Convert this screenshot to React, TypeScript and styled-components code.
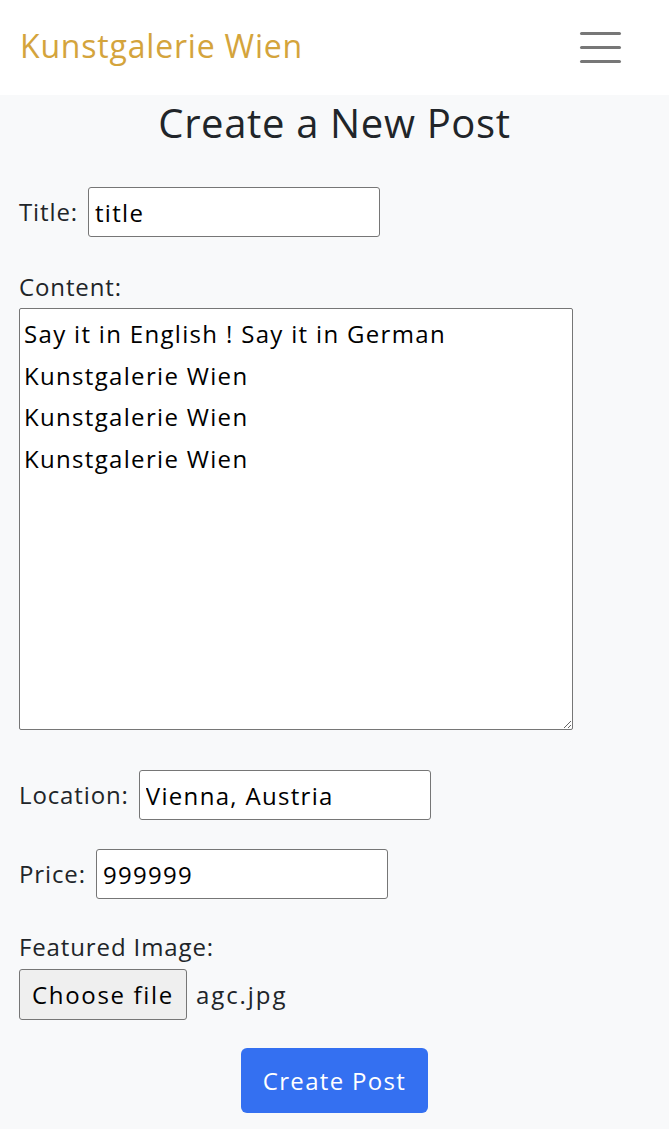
import React from "react";
import styled, { createGlobalStyle } from "styled-components";

const Global = createGlobalStyle`
  html, body { margin: 0; padding: 0; }
  body {
    background: #f8f9fa;
    font-family: "Open Sans", "Noto Sans", sans-serif;
    color: #212529;
    letter-spacing: 0.055em;
  }
  * { box-sizing: border-box; }
`;

const Header = styled.header`
  height: 95px;
  background: #ffffff;
  display: flex;
  align-items: center;
  justify-content: space-between;
  padding: 0 48px 0 20px;
`;

const Brand = styled.div`
  font-size: 32px;
  color: #d4a43c;
  line-height: 1;
  letter-spacing: 0.8px;
  margin-top: -4px;
`;

const Burger = styled.button`
  width: 41px;
  height: 31px;
  border: none;
  background: transparent;
  padding: 0;
  display: flex;
  flex-direction: column;
  justify-content: space-between;
  margin-top: -1px;
`;

const BurgerLine = styled.span`
  display: block;
  height: 3px;
  border-radius: 2px;
  background: #777777;
`;

const Main = styled.main`
  padding: 0 19px;
`;

const Heading = styled.h1`
  margin: 0;
  text-align: center;
  font-size: 40px;
  font-weight: 400;
  line-height: 56px;
  letter-spacing: 0.65px;
`;

const Form = styled.form`
  display: flex;
  flex-direction: column;
  padding-top: 36px;
`;

const Row = styled.div<{ $stack?: boolean; $gap?: number; $after?: number }>`
  display: flex;
  flex-direction: ${(p) => (p.$stack ? "column" : "row")};
  align-items: ${(p) => (p.$stack ? "flex-start" : "center")};
  gap: ${(p) => (p.$gap ?? 10)}px;
  margin-bottom: ${(p) => (p.$after ?? 29)}px;
`;

const Label = styled.label`
  font-size: 24px;
  line-height: 30px;
`;

const TextInput = styled.input`
  width: 292px;
  height: 50px;
  border: 1px solid #767676;
  border-radius: 3px;
  background: #fff;
  font-family: inherit;
  font-size: 24px;
  letter-spacing: 0.055em;
  color: #000;
  padding: 0 6px;
`;

const TextArea = styled.textarea`
  width: 554px;
  height: 422px;
  border: 1px solid #767676;
  border-radius: 2px;
  background: #fff;
  font-family: inherit;
  font-size: 24px;
  letter-spacing: 0.055em;
  line-height: 41.5px;
  color: #000;
  padding: 4px 4px;
  margin: 0;
`;

const FileRow = styled.div`
  display: flex;
  align-items: center;
  gap: 9px;
`;

const FileButton = styled.span`
  display: inline-flex;
  align-items: center;
  justify-content: center;
  width: 168px;
  height: 51px;
  border: 1px solid #767676;
  border-radius: 3px;
  background: #efefef;
  font-size: 24px;
  letter-spacing: 0.07em;
  color: #000;
`;

const FileName = styled.span`
  font-size: 24px;
  letter-spacing: 0.08em;
`;

const Submit = styled.button`
  align-self: center;
  width: 187px;
  height: 65px;
  border: none;
  border-radius: 6px;
  background: #3470f1;
  color: #fff;
  font-family: inherit;
  font-size: 24px;
  letter-spacing: 0.055em;
  margin-top: -1px;
`;

export default function App() {
  return (
    <>
      <Global />
      <Header>
        <Brand>Kunstgalerie Wien</Brand>
        <Burger aria-label="menu">
          <BurgerLine />
          <BurgerLine />
          <BurgerLine />
        </Burger>
      </Header>
      <Main>
        <Heading>Create a New Post</Heading>
        <Form onSubmit={(e) => e.preventDefault()}>
          <Row $after={35}>
            <Label>Title:</Label>
            <TextInput defaultValue="title" />
          </Row>
          <Row $stack $gap={6} $after={40}>
            <Label>Content:</Label>
            <TextArea
              defaultValue={
                "Say it in English ! Say it in German\nKunstgalerie Wien\nKunstgalerie Wien\nKunstgalerie Wien"
              }
            />
          </Row>
          <Row>
            <Label>Location:</Label>
            <TextInput defaultValue="Vienna, Austria" />
          </Row>
          <Row $after={33}>
            <Label>Price:</Label>
            <TextInput defaultValue="999999" />
          </Row>
          <Row $stack $gap={7}>
            <Label>Featured Image:</Label>
            <FileRow>
              <FileButton>Choose file</FileButton>
              <FileName>agc.jpg</FileName>
            </FileRow>
          </Row>
          <Submit type="submit">Create Post</Submit>
        </Form>
      </Main>
    </>
  );
}
